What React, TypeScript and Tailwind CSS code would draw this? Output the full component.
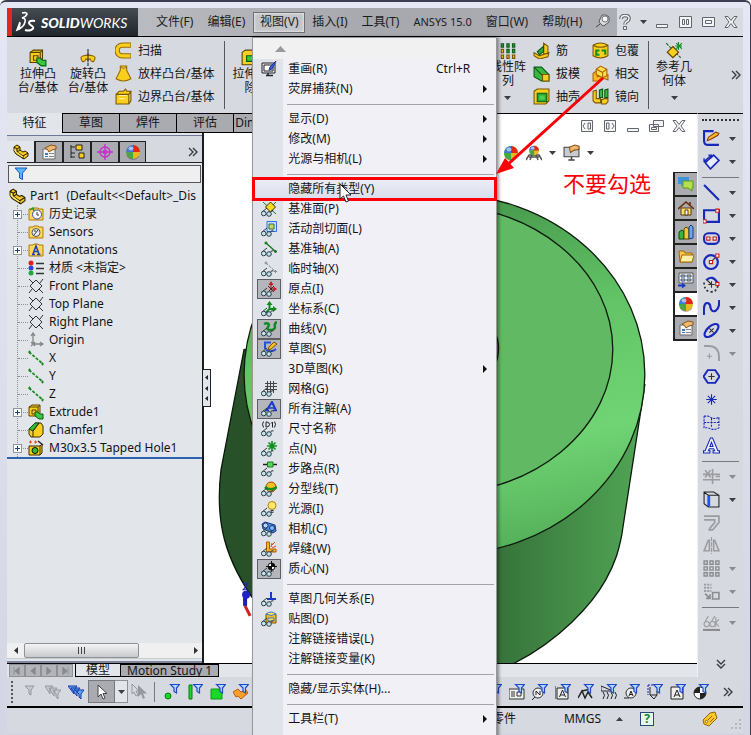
import { ReactNode } from "react";

interface SvgProps {
  children: ReactNode;
  size?: number;
}

function Svg({ children, size = 16 }: SvgProps) {
  return (
    <svg
      viewBox="0 0 16 16"
      width={size}
      height={size}
      fill="none"
      className="shrink-0"
      aria-hidden="true"
    >
      {children}
    </svg>
  );
}

function Caret({ gray = false }: { gray?: boolean }) {
  return (
    <svg viewBox="0 0 7 4" width="7" height="4" className="shrink-0" aria-hidden="true">
      <path d="M0 0h7L3.5 4z" fill={gray ? "#8a8c90" : "#3c3e42"} />
    </svg>
  );
}

function DoubleChevron({ down = false }: { down?: boolean }) {
  return (
    <svg
      viewBox="0 0 10 10"
      width="10"
      height="10"
      fill="none"
      stroke="#3b3d42"
      strokeWidth="1.4"
      className={down ? "rotate-90" : ""}
      aria-hidden="true"
    >
      <path d="M1 1l4 4-4 4M5 1l4 4-4 4" />
    </svg>
  );
}

const funnel = (
  <path d="M6.500 .5h9l-3 3.500v5l-2.500-1.500V4z" fill="#b9d8ff" stroke="#1d49c8" strokeWidth="1.200" />
);

const colorBall = (
  <>
    <circle cx="8" cy="8" r="7" fill="#e8b820" />
    <path d="M8 8V1a7 7 0 0 1 7 7z" fill="#e02818" />
    <path d="M8 8V1a7 7 0 0 0-7 7z" fill="#3f78d8" />
    <path d="M8 8H1a7 7 0 0 0 7 7z" fill="#48a840" />
    <ellipse cx="6" cy="4.500" rx="2.500" ry="2" fill="#fff" opacity=".55" />
    <path d="M2 12a7 7 0 0 0 12 0" stroke="#333" opacity=".4" />
  </>
);

const partIcon = (
  <>
    <path
      d="M1 3l3-2 3 2v3l3 2 2-1 3 2v3l-4 3-8-5-2-3z"
      fill="#f4c81c"
      stroke="#2a2000"
    />
    <path d="M1 3l3 2v3l6 4v3M4 5l3-2M10 12l5-3M7 6l-3 2" stroke="#2a2000" />
    <path d="M2 5v2l8 6" stroke="#fff08a" />
  </>
);

const extrudeIcon = (
  <>
    <path d="M1 3l3-2h8v8l-2 3H1z" fill="#f8cf1e" stroke="#5a4300" />
    <path d="M1 3h9v9M10 3l2-2M4 6h4v4H4z" stroke="#5a4300" />
    <path d="M7 8h3l2 2h3v5h-4l-4-3z" fill="#3cc83c" stroke="#0a5a12" />
  </>
);

const propertyIcon = (
  <>
    <path d="M2 5h12v10H2z" fill="#f4f4f4" stroke="#6c6c6c" />
    <path d="M4 9h3v2H4zM4 12h3v1H4z" fill="#3f7ad0" />
    <path d="M8 9.500h5M8 12.500h5" stroke="#888" />
    <path d="M4 4l6-3 5 1v3l-4 1-3 2-1-2z" fill="#eeb870" stroke="#8a5518" />
  </>
);

const folder = <path d="M1 3h4l1-1h4l1 1h4v11H1z" fill="#fbd75a" stroke="#b47b08" />;

const planeIcon = (
  <path d="M8 2l6 6-6 6-6-6zM1 1l4 4M11 11l4 4M12 5l3-4M1 15l3-4" stroke="#333" />
);

const axisIcon = (
  <>
    <path d="M1 2l14 12" stroke="#188a20" strokeWidth="1.800" strokeDasharray="3 1.500" />
    <path d="M0 2h3M1.500 .5v3M13 14h3M14.500 12.500v3" stroke="#188a20" />
  </>
);

interface TreeNode {
  label: string;
  icon: ReactNode;
  expandable?: boolean;
}

const TREE: TreeNode[] = [
  {
    label: "历史记录",
    expandable: true,
    icon: (
      <>
        {folder}
        <circle cx="9" cy="8.500" r="4.500" fill="#fff" stroke="#3a48b8" />
        <path d="M9 6v3h2" stroke="#333" />
        <path d="M2 4l3-2 1 3" stroke="#1a9a28" strokeWidth="1.500" />
      </>
    ),
  },
  {
    label: "Sensors",
    icon: (
      <>
        {folder}
        <circle cx="8" cy="8.500" r="4" fill="#e8eef4" stroke="#555" />
        <path d="M6 11l4-5M6 7h2" stroke="#333" />
      </>
    ),
  },
  {
    label: "Annotations",
    expandable: true,
    icon: (
      <>
        {folder}
        <path d="M4 12.500h3M9 12.500h3.500M5 12L8 4l3 8M6 9.500h4" stroke="#1b3fc8" strokeWidth="1.500" />
      </>
    ),
  },
  {
    label: "材质 <未指定>",
    icon: (
      <>
        <circle cx="3" cy="3" r="2.500" fill="#d82020" />
        <circle cx="3" cy="8" r="2.500" fill="#2848d0" />
        <circle cx="3" cy="13" r="2.500" fill="#20a838" />
        <path d="M8 3.500h8M8 8.500h8M8 13.500h8" stroke="#333" strokeWidth="1.500" />
      </>
    ),
  },
  { label: "Front Plane", icon: planeIcon },
  { label: "Top Plane", icon: planeIcon },
  { label: "Right Plane", icon: planeIcon },
  {
    label: "Origin",
    icon: (
      <path d="M5 12V2M3 4l2-3 2 3M5 12h9M12 10l3 2-3 2M3 10l4 4M7 10l-4 4" stroke="#858585" strokeWidth="1.300" />
    ),
  },
  { label: "X", icon: axisIcon },
  { label: "Y", icon: axisIcon },
  { label: "Z", icon: axisIcon },
  { label: "Extrude1", expandable: true, icon: extrudeIcon },
  {
    label: "Chamfer1",
    icon: (
      <>
        <path d="M1 7l6-6h6l2 3v8l-3 3H3l-2-3z" fill="#f8cf1e" stroke="#3a2c00" />
        <path d="M1 7l6-6h4L5 9z" fill="#38b838" stroke="#0a4a12" />
        <path d="M5 9v6M5 9l6-8" stroke="#3a2c00" />
      </>
    ),
  },
  {
    label: "M30x3.5 Tapped Hole1",
    expandable: true,
    icon: (
      <>
        <path d="M1 6h11v9H1zM12 6l2-2v9l-2 2" fill="#f8cf1e" stroke="#3a2c00" />
        <circle cx="7" cy="10.500" r="3" fill="#38b838" stroke="#111" />
        <path d="M1 2h3M6 2h3M2.500 .5v3M7.500 .5v3" stroke="#e04818" />
        <path d="M10 1l5 4" stroke="#222" strokeWidth="1.500" />
      </>
    ),
  },
];

interface MenuEntry {
  label?: string;
  icon?: ReactNode;
  checked?: boolean;
  shortcut?: string;
  submenu?: boolean;
  highlight?: boolean;
  glasses?: boolean;
}

const SEPARATOR: MenuEntry = {};

const pencil = <path d="M8 6l5-5 3 2-6 5-3 1z" fill="#f8c028" stroke="#7a4a10" />;

const VIEW_MENU: MenuEntry[] = [
  {
    label: "重画(R)",
    shortcut: "Ctrl+R",
    icon: (
      <>
        <path d="M1 2h13v10H1z" fill="#e8e8e8" stroke="#222" />
        <path d="M3 4h9v6H3z" fill="#fff" stroke="#222" />
        <path d="M5 14.500h7M7 12v2" stroke="#222" strokeWidth="1.500" />
        <path d="M15 0l-6 6-1 3 3-1z" fill="#3060e8" stroke="#1838a0" />
      </>
    ),
  },
  { label: "荧屏捕获(N)", submenu: true },
  SEPARATOR,
  { label: "显示(D)", submenu: true },
  { label: "修改(M)", submenu: true },
  { label: "光源与相机(L)", submenu: true },
  SEPARATOR,
  { label: "隐藏所有类型(Y)", highlight: true },
  {
    label: "基准面(P)",
    glasses: true,
    icon: (
      <>
        <path d="M2 1l13 12M15 1l-4 4" stroke="#187a20" />
        <path d="M9.500 1l5 5-5 5-5-5z" fill="#f8d820" stroke="#3a3000" />
      </>
    ),
  },
  {
    label: "活动剖切面(L)",
    glasses: true,
    icon: (
      <>
        <path d="M6 .5h9.500v10H6z" fill="#c8dcff" stroke="#3070e0" />
        <path d="M8 3h5v5H8z" fill="#d8d058" stroke="#287838" />
      </>
    ),
  },
  {
    label: "基准轴(A)",
    glasses: true,
    icon: (
      <path d="M5 2l10 9M3.500 2h3M5 .5v3M13 10.500h3M14.500 9v3" stroke="#187a20" strokeWidth="1.400" />
    ),
  },
  {
    label: "临时轴(X)",
    glasses: true,
    icon: <path d="M5 2l10 9M3.500 2h3M5 .5v3M13 10.500h3M14.500 9v3" stroke="#888" strokeDasharray="3 1" />,
  },
  {
    label: "原点(I)",
    checked: true,
    glasses: true,
    icon: (
      <>
        <path d="M10 8V3M10 8h4M7 5l6 6M13 5l-5 5" stroke="#7a1010" />
        <path d="M7.500 4L10 0l2.500 4zM12.500 5.500L16 8l-3.500 2.500z" fill="#c81818" />
      </>
    ),
  },
  {
    label: "坐标系(C)",
    glasses: true,
    icon: (
      <>
        <path d="M8.500 8V3M8 8h5M8.500 8l-4 4" stroke="#108a20" strokeWidth="2" />
        <path d="M5.500 4l3-4 3 4zM12 5l4 3-4 3z" fill="#108a20" />
      </>
    ),
  },
  {
    label: "曲线(V)",
    checked: true,
    glasses: true,
    icon: <path d="M3 3c4-2 6 0 4 3s3 4 6 2-2-5 3-7" stroke="#108a20" strokeWidth="2.500" />,
  },
  {
    label: "草图(S)",
    checked: true,
    glasses: true,
    icon: (
      <>
        <path d="M10 1.500H4V8M5 9c4 2 8 1 10-1" stroke="#2850e0" strokeWidth="2" />
        {pencil}
      </>
    ),
  },
  { label: "3D草图(K)", submenu: true },
  {
    label: "网格(G)",
    glasses: true,
    icon: <path d="M6.500 0v12M9.500 0v12M12.500 0v12M4 2.500h12M4 5.500h12M4 8.500h12" stroke="#444" />,
  },
  {
    label: "所有注解(A)",
    checked: true,
    glasses: true,
    icon: (
      <>
        <path d="M5.500 9.500L11 1l4 8.500" stroke="#1838c8" strokeWidth="2" />
        <path d="M8 7h6M4 9.500h4M12 9.500h4" stroke="#1838c8" strokeWidth="1.500" />
      </>
    ),
  },
  {
    label: "尺寸名称",
    glasses: true,
    icon: (
      <path
        d="M2.500 .5Q.5 3 2.500 6.500M13.500 .5q2 2.500 0 6M5 1v5h1Q8.500 5.500 8.500 3.500T6 1zM10 2.500l1.500-1.500V6.500"
        stroke="#222"
      />
    ),
  },
  {
    label: "点(N)",
    glasses: true,
    icon: <path d="M11 0v10M6 5h10M7.500 1.500l7 7M14.500 1.500l-7 7" stroke="#109020" strokeWidth="1.700" />,
  },
  {
    label: "步路点(R)",
    glasses: true,
    icon: (
      <>
        <path d="M2 3.500h14" stroke="#222" strokeWidth="1.500" />
        <path d="M6.500 1h5.500v5H6.500z" fill="#58d858" stroke="#187a20" />
      </>
    ),
  },
  {
    label: "分型线(T)",
    glasses: true,
    icon: (
      <>
        <circle cx="10" cy="6" r="5" fill="#f0c020" stroke="#a04808" />
        <path d="M4 6c3 3 8 3 12 0" stroke="#109020" strokeWidth="2.500" />
      </>
    ),
  },
  {
    label: "光源(I)",
    glasses: true,
    icon: (
      <>
        <circle cx="11" cy="4.500" r="4" fill="#ffe868" stroke="#b08010" />
        <path d="M9.500 9.500h3M9.500 11.500h3" stroke="#555" />
      </>
    ),
  },
  {
    label: "相机(C)",
    glasses: true,
    icon: (
      <>
        <path d="M1 3l3-2 10 3 1 6-3 2-10-4z" fill="#4888e0" stroke="#183878" />
        <circle cx="4.500" cy="4.500" r="2.500" fill="#b8d8ff" stroke="#183878" />
        <circle cx="11" cy="7" r="2.500" fill="#88b8f8" stroke="#183878" />
      </>
    ),
  },
  {
    label: "焊缝(W)",
    glasses: true,
    icon: (
      <>
        <path d="M5.500 1h3v7H15v3H5.500z" fill="#f8b818" stroke="#b05808" />
        <path d="M10 6l1-4M11 7l4-2M11 4l3-3" stroke="#d84818" />
      </>
    ),
  },
  {
    label: "质心(N)",
    checked: true,
    glasses: true,
    icon: (
      <>
        <circle cx="10.500" cy="5.500" r="3.500" fill="#fff" stroke="#111" />
        <path d="M10.500 2v3.500H14A3.500 3.500 0 0 0 10.500 2zM10.500 9V5.500H7A3.500 3.500 0 0 0 10.500 9z" fill="#111" />
        <path d="M10.500 0v11M5 5.500h11" stroke="#111" />
      </>
    ),
  },
  SEPARATOR,
  {
    label: "草图几何关系(E)",
    glasses: true,
    icon: <path d="M10 1v7M6 8h9" stroke="#1838c8" strokeWidth="2" />,
  },
  {
    label: "贴图(D)",
    glasses: true,
    icon: (
      <>
        <path d="M5 3h10v9H5z" fill="#f0c020" stroke="#805008" />
        <path d="M5 3q5-4 10 0-5 3-10 0zM7 7h6v3H7z" fill="#f8e068" stroke="#3878c8" />
      </>
    ),
  },
  { label: "注解链接错误(L)" },
  { label: "注解链接变量(K)" },
  SEPARATOR,
  { label: "隐藏/显示实体(H)..." },
  SEPARATOR,
  { label: "工具栏(T)", submenu: true },
];

function Glasses() {
  return (
    <>
      <path d="M1 11l5-4M9.500 11.500q1-3 3-1.500" stroke="#2c3c44" />
      <circle cx="2.700" cy="12.500" r="2.300" fill="#c4e4f0" stroke="#2c3c44" />
      <circle cx="8" cy="13" r="2.300" fill="#c4e4f0" stroke="#2c3c44" />
    </>
  );
}

function MenuRow({ entry }: { entry: MenuEntry }) {
  if (!entry.label) {
    return (
      <div className="flex h-[10px] items-center pr-[2px] pl-[34px]">
        <hr className="w-full border-0 border-t border-[#a3a3a8]" />
      </div>
    );
  }
  return (
    <button
      type="button"
      role="menuitem"
      className={`relative flex h-5 w-full items-center text-left ${
        entry.highlight ? "bg-linear-to-b from-[#eceef6] to-[#d9dceb]" : ""
      }`}
    >
      <span
        className={`ml-1 flex h-5 w-6 shrink-0 items-center justify-center ${
          entry.checked ? "border border-[#5c5e63] bg-[#b4b6bc]" : ""
        }`}
      >
        {entry.icon && (
          <Svg>
            {entry.icon}
            {entry.glasses && <Glasses />}
          </Svg>
        )}
      </span>
      <span className="ml-[7px]">{entry.label}</span>
      {entry.shortcut && <span className="mr-[26px] ml-auto">{entry.shortcut}</span>}
      {entry.submenu && (
        <svg viewBox="0 0 4 8" width="4" height="8" className="mr-[9px] ml-auto" aria-hidden="true">
          <path d="M0 0l4 4-4 4z" fill="#111" />
        </svg>
      )}
      {entry.highlight && (
        <>
          <span className="absolute -inset-x-px -inset-y-[2px] border-3 border-[#fb0007]" />
          <svg viewBox="0 0 13 20" width="13" height="20" className="absolute top-1 left-[86px]" aria-hidden="true">
            <path d="M1 1v15l3.500-3 2.500 6 2.500-1-2.500-6H12z" fill="#fff" stroke="#222" />
          </svg>
        </>
      )}
    </button>
  );
}

function ViewMenu() {
  return (
    <div
      role="menu"
      className="absolute top-full -left-px z-20 mt-px w-[245px] border border-[#97979c] bg-linear-to-r from-[#e1e3ea] from-[30px] to-[#f1f0f7] to-[30px] pb-4 text-xs whitespace-nowrap text-[#141416] shadow-[2px_0_3px_#0006]"
    >
      <div className="flex h-[21px] items-center bg-[#f1f1f1] pl-[22px]">
        <svg viewBox="0 0 11 6" width="11" height="6" aria-hidden="true">
          <path d="M0 6h11L5.500 0z" fill="#97999c" />
        </svg>
      </div>
      {VIEW_MENU.map((entry, i) => (
        <MenuRow key={i} entry={entry} />
      ))}
    </div>
  );
}

function MenuBarItem({ label }: { label: string }) {
  return (
    <button type="button" className="px-[7px]">
      {label}
    </button>
  );
}

function WindowGlyph({ kind }: { kind: "min" | "split" | "max" | "close" | "left" | "right" | "restore" }) {
  return (
    <svg viewBox="0 0 16 14" width="16" height="14" fill="#f4f5f7" stroke="#63666c" strokeWidth="1" aria-hidden="true">
      {kind === "min" && <path d="M2.500 9.500h11v3h-11z" />}
      {kind === "split" && <path d="M2.500 1.500h12v11h-12zM5.500 4.500h2v5h-2zM9.500 4.500h2v5h-2z" />}
      {kind === "max" && <path d="M2.500 2.500h12v9h-12zM5.500 5.500h6v3h-6z" />}
      {kind === "close" && <path d="M2 1.500h3l3 4 3-4h3L10 7l4 5.500h-3l-3-4-3 4H2L6 7z" />}
      {kind === "left" && <path d="M2.500 1.500h11v11h-11zM9 4h2.500v6H9zM6 4L4 7l2 3" />}
      {kind === "right" && <path d="M2.500 1.500h11v11h-11zM4.500 4H7v6H4.500zM10 4l2 3-2 3" />}
      {kind === "restore" && <path d="M5.500 1.500h10v6h-10zM1.500 5.500h9v7h-9zM3.500 8.500h5v2h-5z" />}
    </svg>
  );
}

function TitleBar() {
  return (
    <header className="flex h-[29px] shrink-0 border-b border-black bg-[#d8dbe1]">
      <div className="flex w-[131px] shrink-0 items-center border-l-[5px] border-[#dd2a1c] bg-linear-to-b from-[#454c52] to-[#20262c] pl-[3px] text-white">
        <svg viewBox="0 0 22 22" width="22" height="22" fill="none" stroke="#fff" strokeWidth="1.600" aria-hidden="true">
          <path d="M7 2q5-1 5 1-1 3-5 4 4 0 3 4-1 5-8 8l3-8M5 12l-1 7" />
          <path d="M20 10q-6-1-6 2 0 1 3 3t-1 4q-3 1-6 0" strokeWidth="2" />
        </svg>
        <span className="ml-[4px] pt-[2px] font-['Lato',sans-serif] text-sm leading-4 italic">
          <b className="font-black">SOLID</b>WORKS
        </span>
      </div>
      <nav className="flex shrink-0 items-stretch bg-linear-to-r from-[#b9bbc0] via-[#a6a8ad] to-[#acaeb3] pl-[11px] text-xs whitespace-nowrap text-[#1c1c1e]">
        <MenuBarItem label="文件(F)" />
        <MenuBarItem label="编辑(E)" />
        <div className="relative ml-px flex items-center">
          <button
            type="button"
            aria-expanded="true"
            className="h-[21px] w-[52px] border border-[#6e7074] bg-[#c4c5c9] shadow-[inset_0_0_3px_#fff]"
          >
            视图(V)
          </button>
          <ViewMenu />
        </div>
        <MenuBarItem label="插入(I)" />
        <MenuBarItem label="工具(T)" />
        <button type="button" className="px-[7px] text-[11px]">
          ANSYS 15.0
        </button>
        <MenuBarItem label="窗口(W)" />
        <MenuBarItem label="帮助(H)" />
        <button type="button" aria-label="固定" className="px-[6px]">
          <Svg>
            <path d="M1 13l4-3" stroke="#444" />
            <path d="M4 8l4 4 2-1 4-3V3l-3-2H7L5 5z" fill="#d8dade" stroke="#55585e" />
            <circle cx="10" cy="5" r="3" fill="#f8f8f8" stroke="#777" />
          </Svg>
        </button>
      </nav>
      <div className="ml-auto flex items-center">
        <button type="button" aria-label="帮助">
          <Svg>
            <path d="M4 5q0-3.500 4-3.500t4 3q0 2-2.500 3.200Q8 8.500 8 10.500" stroke="#5f6268" strokeWidth="3.500" />
            <path d="M4 5q0-3.500 4-3.500t4 3q0 2-2.500 3.200Q8 8.500 8 10.500" stroke="#f2f3f5" strokeWidth="1.500" />
            <path d="M6.500 12.500h3v3h-3z" fill="#f2f3f5" stroke="#5f6268" />
          </Svg>
        </button>
        <span className="mx-[7px]">
          <Caret />
        </span>
        <div className="flex gap-[7px] pr-1">
          <button type="button" aria-label="最小化"><WindowGlyph kind="min" /></button>
          <button type="button" aria-label="平铺"><WindowGlyph kind="split" /></button>
          <button type="button" aria-label="最大化"><WindowGlyph kind="max" /></button>
          <button type="button" aria-label="关闭"><WindowGlyph kind="close" /></button>
        </div>
      </div>
    </header>
  );
}

interface BigButtonProps {
  lines: [string, string];
  icon: ReactNode;
  caret?: boolean;
}

function BigButton({ lines, icon, caret }: BigButtonProps) {
  return (
    <button
      type="button"
      className={`flex w-[50px] shrink-0 flex-col items-center ${caret ? "pt-[5px]" : "pt-[12px]"}`}
    >
      <Svg size={18}>{icon}</Svg>
      <span className="text-xs leading-[14px] whitespace-nowrap">{lines[0]}</span>
      <span className="text-xs leading-[14px] whitespace-nowrap">{lines[1]}</span>
      {caret && (
        <span className="mt-[8px] flex">
          <Caret />
        </span>
      )}
    </button>
  );
}

function SmallButton({ label, icon }: { label: string; icon: ReactNode }) {
  return (
    <button type="button" className="flex h-[23px] items-center gap-[6px] text-xs whitespace-nowrap">
      <Svg size={17}>{icon}</Svg>
      {label}
    </button>
  );
}

function Ribbon() {
  return (
    <div className="flex h-[76px] shrink-0 overflow-hidden bg-[#d6d9df] pl-[6px]">
      <BigButton lines={["拉伸凸", "台/基体"]} icon={extrudeIcon} />
      <BigButton
        lines={["旋转凸", "台/基体"]}
        icon={
          <>
            <path d="M8 0v16" stroke="#333" strokeDasharray="3 1" />
            <path d="M3 11q-3-4 1-5 4-1 8 0 4 1 1 5-2 1-3-2H6q-1 3-3 2z" fill="#f8cf1e" stroke="#8a6000" />
            <path d="M8 3v8" stroke="#333" />
          </>
        }
      />
      <div className="ml-[2px] pt-[2px]">
        <SmallButton
          label="扫描"
          icon={
            <>
              <path d="M15 3H7a5 5 0 0 0 0 10h8" stroke="#9a6c00" strokeWidth="5" />
              <path d="M14.500 3H7a5 5 0 0 0 0 10h7.500" stroke="#f8cf1e" strokeWidth="3" />
            </>
          }
        />
        <SmallButton
          label="放样凸台/基体"
          icon={<path d="M5 1h6v4l4 8q-7 4-14 0l4-8zM5 2q3 2 6 0" fill="#f8cf1e" stroke="#9a6c00" />}
        />
        <SmallButton
          label="边界凸台/基体"
          icon={
            <>
              <path d="M1 6h12v9H1zM1 6l3-3h4l2-2 1 2h4l-2 3M13 15l2-3V3" fill="#f8cf1e" stroke="#7a5400" />
              <path d="M4 7h7M4 10h5" stroke="#fff3a0" />
            </>
          }
        />
      </div>
      <div className="my-1 ml-[10px] w-px shrink-0 bg-[#55585e]" />
      <BigButton
        lines={["拉伸切", "除"]}
        icon={
          <>
            <path d="M1 3l3-2h10v10l-2 3H1z" fill="#f8cf1e" stroke="#5a4300" />
            <path d="M5 6h6v5H5z" fill="#3cc83c" stroke="#0a5a12" />
          </>
        }
      />
      <div className="ml-auto flex">
        <BigButton
          caret
          lines={["线性阵", "列"]}
          icon={
            <>
              <path d="M2 1.500h2v3H2zM7 1.500h2v3H7zM12 1.500h2v3h-2zM7 6.500h2v3H7zM12 6.500h2v3h-2z" fill="#28a838" stroke="#125a1a" />
              <path d="M2 6.500h2v3H2zM2 11.500h2v3H2zM7 11.500h2v3H7zM12 11.500h2v3h-2z" fill="#f0c020" stroke="#7a5400" />
            </>
          }
        />
        <div className="pt-[2px]">
          <SmallButton
            label="筋"
            icon={
              <>
                <path d="M1 10l5 3 9-3-1 4-8 2-5-3zM10 1l4 3v7h-4z" fill="#f8cf1e" stroke="#7a5400" />
                <path d="M4 9l6-5v5l-4 3z" fill="#30a838" stroke="#0a5a12" />
              </>
            }
          />
          <SmallButton
            label="拔模"
            icon={
              <>
                <path d="M1 2l7 0 7 7v6H8L1 11z" fill="#38b840" stroke="#0a5a12" />
                <path d="M1 2l8 8v5" stroke="#0a5a12" />
                <path d="M9 9h6v6H9z" fill="#f8cf1e" stroke="#7a5400" />
              </>
            }
          />
          <SmallButton
            label="抽壳"
            icon={
              <>
                <path d="M1 3l3-2h11v11l-3 3H1z" fill="#f8cf1e" stroke="#7a5400" />
                <path d="M4 5h9v8H4z" fill="#28a838" stroke="#0a5a12" />
                <path d="M6 7h5v4H6z" fill="#4ad052" />
              </>
            }
          />
        </div>
        <div className="ml-3 pt-[2px]">
          <SmallButton
            label="包覆"
            icon={
              <>
                <path d="M1 3q7-4 14 0v10q-7 4-14 0z" fill="#f8cf1e" stroke="#7a5400" />
                <path d="M7 8H4v4h3M9 8h3.500v4" stroke="#109020" strokeWidth="2" />
                <path d="M1 3q7 4 14 0" stroke="#7a5400" />
              </>
            }
          />
          <SmallButton
            label="相交"
            icon={
              <>
                <path d="M1 8l4-3v6l10-2v5l-5-2-4 3H1z" fill="#f8b81e" stroke="#b06008" />
                <path d="M4 4l4-3 6 3v6l-4 2-6-3z" fill="#ffe04a" stroke="#b06008" />
                <path d="M4 4l6 3v5M10 7l4-3" stroke="#b06008" />
              </>
            }
          />
          <SmallButton
            label="镜向"
            icon={
              <>
                <path d="M1 3l3-1v8h4v4H3l-2-2zM12 10h3v3l-2 2H9v-4z" fill="#f8cf1e" stroke="#7a5400" />
                <path d="M7 2l3-1v8H7zM12 2l3-1v8h-3z" fill="#38b840" stroke="#0a5a12" />
              </>
            }
          />
        </div>
        <div className="my-1 ml-[9px] w-px bg-[#55585e]" />
        <BigButton
          caret
          lines={["参考几", "何体"]}
          icon={
            <>
              <path d="M1 1l13 13" stroke="#187a20" strokeDasharray="3 1" />
              <path d="M7 4l5 5-5 5-5-5z" fill="#f8cf1e" stroke="#5a4300" />
              <path d="M12 0v7M9 3.500h6M10 1l5 5M15 1l-5 5" stroke="#109020" />
            </>
          }
        />
        <button type="button" aria-label="更多" className="mr-[2px] ml-8">
          <DoubleChevron />
        </button>
      </div>
    </div>
  );
}

function CommandTabs() {
  return (
    <div className="flex h-5 shrink-0">
      <div role="tablist" className="flex shrink-0 text-xs">
        <button type="button" role="tab" aria-selected="true" className="w-[55px] bg-[#e2e5ea]">
          特征
        </button>
        {["草图", "焊件", "评估", "DimXpert"].map((tab) => (
          <button
            key={tab}
            type="button"
            role="tab"
            className="w-[57px] border border-r-0 border-black bg-[#a9abb0]"
          >
            {tab}
          </button>
        ))}
      </div>
      <div className="flex flex-1 items-end justify-end gap-[7px] border-t border-black bg-white pr-[10px]">
        <button type="button" aria-label="左窗格"><WindowGlyph kind="left" /></button>
        <button type="button" aria-label="右窗格"><WindowGlyph kind="right" /></button>
        <button type="button" aria-label="最小化文档"><WindowGlyph kind="min" /></button>
        <button type="button" aria-label="还原文档"><WindowGlyph kind="restore" /></button>
        <button type="button" aria-label="关闭文档"><WindowGlyph kind="close" /></button>
      </div>
    </div>
  );
}

const PANEL_TABS: ReactNode[] = [
  propertyIcon,
  <>
    <path d="M2 1v13M2 3h4M2 9h4M2 13h4" stroke="#222" />
    <path d="M7 1h6v5H7zM10 9h5v5h-5z" fill="#f8cf1e" stroke="#222" />
  </>,
  <>
    <circle cx="8" cy="8" r="5" stroke="#c030c8" strokeWidth="1.300" />
    <circle cx="8" cy="8" r="2" stroke="#c030c8" />
    <path d="M8 0v16M0 8h16" stroke="#c030c8" strokeWidth="1.300" />
  </>,
  colorBall,
];

function FeaturePanel() {
  return (
    <aside className="flex w-[197px] shrink-0 flex-col border-r-2 border-[#1c1c20] bg-[#e2e6eb]">
      <div className="mt-[2px] h-[6px] shrink-0 border-t border-[#6f7896] bg-[#d6d9df]" />
      <div className="flex h-[22px] shrink-0 items-center border-b border-[#222] bg-[#d6d9df]">
        <button type="button" aria-label="特征树" className="flex h-full w-[27px] items-center justify-center bg-[#e2e6eb]">
          <Svg>{partIcon}</Svg>
        </button>
        {PANEL_TABS.map((icon, i) => (
          <button
            key={i}
            type="button"
            aria-label={`窗格 ${i + 2}`}
            className="flex h-full w-7 items-center justify-center border-t border-l-2 border-[#222] bg-[#a9abb0] last-of-type:border-r"
          >
            <Svg>{icon}</Svg>
          </button>
        ))}
        <span className="mr-1 ml-auto">
          <DoubleChevron />
        </span>
      </div>
      <label className="mx-px mt-[2px] flex h-[18px] shrink-0 items-center border border-[#55555a] bg-[#efeff0] pl-1">
        <Svg>
          <path d="M2 2h12l-4.500 5v6.500L6.500 12V7z" fill="#58b8f8" stroke="#1858c0" />
        </Svg>
        <input type="text" aria-label="过滤器" className="min-w-0 flex-1 bg-transparent text-xs outline-none" />
      </label>
      <div className="mt-[4px] text-xs whitespace-nowrap">
        <div className="flex h-[18px] items-center gap-1 pl-[2px]">
          <Svg size={17}>{partIcon}</Svg>
          <span className="whitespace-pre">{"Part1  (Default<<Default>_Dis"}</span>
        </div>
        <ul className="relative ml-[10px] border-l border-dotted border-[#8e9196]">
          {TREE.map(({ label, icon, expandable }) => (
            <li key={label} className="flex h-[18px] items-center">
              <span className="w-[10px] shrink-0 border-t border-dotted border-[#8e9196]" />
              {expandable && (
                <button
                  type="button"
                  aria-label={`展开 ${label}`}
                  className="absolute -left-[5px] flex size-[9px] items-center justify-center border border-[#8b95a8] bg-white"
                >
                  <svg viewBox="0 0 5 5" width="5" height="5" className="shrink-0" aria-hidden="true">
                    <path d="M2 0h1v2h2v1H3v2H2V3H0V2h2z" fill="#24407c" />
                  </svg>
                </button>
              )}
              <Svg>{icon}</Svg>
              <span className="ml-[5px]">{label}</span>
            </li>
          ))}
        </ul>
        <div className="h-[2px] bg-[#2c62b0]" />
      </div>
      <div className="mt-auto mb-[2px] flex h-4 shrink-0 items-center border-b border-[#c8cace] bg-[#f0f0f0]">
        <button type="button" aria-label="向左" className="flex w-[17px] justify-center">
          <svg viewBox="0 0 4 7" width="4" height="7"><path d="M4 0v7L0 3.500z" fill="#333" /></svg>
        </button>
        <div className="flex h-[15px] w-[115px] items-center justify-center gap-[2px] rounded-xs border border-[#8f9296] bg-linear-to-b from-[#f4f4f4] to-[#c8cacd]">
          <i className="h-[7px] w-px bg-[#444]" />
          <i className="h-[7px] w-px bg-[#444]" />
          <i className="h-[7px] w-px bg-[#444]" />
        </div>
        <button type="button" aria-label="向右" className="ml-auto flex w-3 justify-center">
          <svg viewBox="0 0 4 7" width="4" height="7"><path d="M0 0v7l4-3.500z" fill="#333" /></svg>
        </button>
      </div>
      <div className="h-[2px] shrink-0 bg-[#7e869c]" />
    </aside>
  );
}

const TASK_TABS: ReactNode[] = [
  <>
    <path d="M0 1h11v7H5l-2 3V8H0z" fill="#3f94d8" />
    <path d="M5 5h10v7h-1v3l-4-3H5z" fill="#b4e050" stroke="#5a9a18" />
  </>,
  <>
    <path d="M3 8h10v7H3z" fill="#fbe070" stroke="#5a3a08" />
    <path d="M0 9l8-7 8 7M12 2v3" stroke="#6a2a08" strokeWidth="1.500" />
    <path d="M7 10h3v5H7z" fill="#fff" stroke="#5a3a08" />
  </>,
  <>
    <path d="M1 8l3-2 2 2v7H1z" fill="#30b840" stroke="#0a4a12" />
    <path d="M6 5l2-2 3 2v10H6z" fill="#f0c838" stroke="#5a4300" />
    <path d="M11 3l2-2 2 2v11l-4 1z" fill="#70a8f0" stroke="#183878" />
  </>,
  <>
    <path d="M1 3h5l1 2h7v9H2z" fill="#f8c848" stroke="#a06808" />
    <path d="M4 7h12l-2 7H2z" fill="#fff0a8" stroke="#a06808" />
  </>,
  <>
    <path d="M1 1h14v10H1z" fill="#f4f4f4" stroke="#555" />
    <path d="M3 3h4v2H3zM9 3h4v2H9zM3 7h4v2H3zM9 7h4v2H9z" fill="#e8c838" stroke="#3858a8" />
    <path d="M0 13.500h4" stroke="#1838c8" strokeWidth="2" />
    <path d="M4 10.500l4 3-4 3z" fill="#1838c8" />
  </>,
  colorBall,
  propertyIcon,
];

function Model() {
  return (
    <svg
      viewBox="205 134 492 529"
      preserveAspectRatio="xMinYMin meet"
      className="absolute inset-0 h-full w-full"
      role="img"
      aria-label="Part1"
    >
      <defs>
        <linearGradient id="side" x1="220" x2="645" y1="0" y2="0" gradientUnits="userSpaceOnUse">
          <stop offset="0" stopColor="#28522b" />
          <stop offset=".1" stopColor="#285028" />
          <stop offset=".65" stopColor="#36723a" />
          <stop offset="1" stopColor="#52a656" />
        </linearGradient>
        <linearGradient id="chamfer" x1="496" y1="200" x2="560" y2="540" gradientUnits="userSpaceOnUse">
          <stop offset="0" stopColor="#489a4d" />
          <stop offset=".35" stopColor="#62c466" />
          <stop offset=".7" stopColor="#70d474" />
          <stop offset="1" stopColor="#55b059" />
        </linearGradient>
      </defs>
      <path
        d="M245 350L222 470C216 520 224 560 262 610C310 670 440 690 515 663C560 640 592 605 606 580C616 562 619 550 622 535L645 385z"
        fill="url(#side)"
        stroke="#0c1a0c"
        strokeWidth="1.300"
      />
      <ellipse cx="445" cy="375" rx="200" ry="180" fill="url(#chamfer)" stroke="#0c1a0c" strokeWidth="1.300" />
      <ellipse cx="435" cy="350" rx="178" ry="145" fill="#61b963" stroke="#0c1a0c" strokeWidth="1.300" />
      <ellipse cx="440" cy="349" rx="59" ry="48" fill="#3d8a42" stroke="#0c1a0c" strokeWidth="1.300" />
      <path d="M246 606l5 10" stroke="#d02020" strokeWidth="3" />
      <path d="M246 606v-8" stroke="#1c20a8" strokeWidth="4" />
      <circle cx="247" cy="595" r="4" fill="#2020c8" />
      <path d="M244 584h5l-5 6h5" stroke="#2020d8" fill="none" />
    </svg>
  );
}

function Viewport() {
  return (
    <main className="relative flex min-w-0 flex-1 items-start bg-white">
      <Model />
      <button
        type="button"
        aria-label="折叠窗格"
        className="relative mt-[236px] -ml-px flex h-[38px] w-2 flex-col items-center justify-evenly border border-l-0 border-[#222] bg-[#e2e6eb]"
      >
        {[0, 1, 2].map((n) => (
          <svg key={n} viewBox="0 0 3 5" width="3" height="5"><path d="M3 0v5L0 2.500z" fill="#222" /></svg>
        ))}
      </button>
      <div className="relative mt-[11px] ml-auto flex items-center gap-[7px] pr-[79px]">
        <Svg>{colorBall}</Svg>
        <Svg>
          <path d="M0 15l3-5h10l3 5M3 12h10M6 10l-2 5M10 10l2 5" stroke="#555" strokeWidth="1.500" />
          <g transform="translate(2.500 0) scale(.7)">{colorBall}</g>
        </Svg>
        <Caret />
        <Svg size={17}>
          <path d="M1 3h14v9H1z" fill="#c8ccd0" stroke="#444" />
          <path d="M5 15h6M8 12v3" stroke="#444" strokeWidth="1.500" />
          <path d="M6 3l5-2 4 1v3l-5 1-3 2z" fill="#eeb870" stroke="#8a5518" />
        </Svg>
        <Caret />
      </div>
      <div className="relative mt-[39px] flex w-6 flex-col border-t border-l-2 border-[#222]">
        {TASK_TABS.map((icon, i) => (
          <button
            key={i}
            type="button"
            aria-label={`任务 ${i + 1}`}
            className={`flex h-6 items-center justify-center border-b-2 border-[#222] ${
              i === 5 ? "bg-white" : "bg-[#a9abb0]"
            }`}
          >
            <Svg>{icon}</Svg>
          </button>
        ))}
      </div>
      <p className="absolute top-[35px] right-[46px] text-[22px] leading-[30px] text-[#fb0007]">不要勾选</p>
    </main>
  );
}

function DocumentTabs() {
  return (
    <div className="flex h-[14px] shrink-0 border-t border-black bg-[#e2e6eb] pl-[2px]">
      {["M11 3v10l-6-5zM4 3v10", "M11 3v10l-6-5z", "M5 3v10l6-5z", "M5 3v10l6-5zM12 3v10"].map((d) => (
        <button
          key={d}
          type="button"
          aria-label="滚动标签"
          className="flex w-4 items-center justify-center border border-[#8e9094] bg-[#b2b4b9]"
        >
          <Svg size={12}>
            <path d={d} fill="#888a8f" stroke="#888a8f" />
          </Svg>
        </button>
      ))}
      <button type="button" className="ml-[2px] flex w-[46px] items-center justify-center border border-t-0 border-black text-xs leading-3">
        模型
      </button>
      <button type="button" className="flex items-center border border-l-0 border-black bg-[#a9abb0] px-[6px] text-xs leading-3">
        Motion Study 1
      </button>
    </div>
  );
}

interface SketchTool {
  icon?: ReactNode;
  caret?: boolean;
  gray?: boolean;
}

const redDot = (x: number, y: number) => (
  <path d={`M${x} ${y}h3v3h-3z`} fill="#fff" stroke="#c81818" />
);

const SKETCH_TOOLS: SketchTool[] = [
  {
    caret: true,
    icon: (
      <>
        <path d="M10 1H1v9q0 4 4 4h10" stroke="#1828b8" strokeWidth="2" />
        <path d="M5 7l7-5 3 1-1 2-7 4-3 1z" fill="#f8b828" stroke="#8a3a10" />
      </>
    ),
  },
  {
    caret: true,
    icon: (
      <>
        <path d="M2 9l8-7 5 5-8 8z" fill="#e8ecff" stroke="#1828b8" strokeWidth="1.500" />
        <path d="M1 8l7-6M1 5v3h3M5 2h3v3" stroke="#1828b8" strokeWidth="1.300" />
      </>
    ),
  },
  {},
  { caret: true, icon: <path d="M1 1l14 14" stroke="#1828b8" strokeWidth="2" /> },
  { caret: true, icon: <><path d="M1 3h14v11H1z" stroke="#1828b8" strokeWidth="2" />{redDot(12, 2)}{redDot(0, 12)}</> },
  {
    caret: true,
    icon: (
      <>
        <rect x="1" y="3" width="14" height="10" rx="4" stroke="#1828b8" strokeWidth="2" />
        {redDot(3.500, 6.500)}
        {redDot(9.500, 6.500)}
      </>
    ),
  },
  {
    caret: true,
    icon: (
      <>
        <circle cx="7.500" cy="8.500" r="6.500" stroke="#1828b8" strokeWidth="2" />
        <path d="M8 8l5-5" stroke="#333" />
        {redDot(6, 7)}
        {redDot(12, 1)}
      </>
    ),
  },
  {
    caret: true,
    icon: (
      <>
        <path d="M3 4q6-6 11 3" stroke="#1828b8" strokeWidth="2" />
        <path d="M14 9q-1 6-7 6-6-1-6-9" stroke="#333" strokeWidth="1.600" strokeDasharray="2 2" />
        <path d="M4 4l4 4M5 8h6M8 5v6" stroke="#333" />
        {redDot(12, 6)}
      </>
    ),
  },
  { caret: true, icon: <path d="M1 15q-1-13 4-11 2 1 2 4 1 5 5 3 4-3 3-10" stroke="#1828b8" strokeWidth="2" /> },
  {
    caret: true,
    icon: (
      <>
        <ellipse cx="8" cy="8" rx="8" ry="4" transform="rotate(-42 8 8)" stroke="#1828b8" strokeWidth="2" />
        <path d="M6 6l4 4M10 6l-4 4" stroke="#333" />
      </>
    ),
  },
  {
    caret: true,
    gray: true,
    icon: (
      <>
        <path d="M1 1h4q10 0 10 10v4" stroke="#9a9ca0" strokeWidth="1.800" />
        <path d="M6 8v5M3.500 10.500h5" stroke="#9a9ca0" />
      </>
    ),
  },
  {
    icon: (
      <>
        <path d="M4.500 2h7l4 6-4 6h-7l-4-6z" stroke="#1828b8" strokeWidth="1.800" />
        <path d="M8 5v6M5 8h6" stroke="#333" />
      </>
    ),
  },
  { icon: <path d="M8 3v10M3 8h10M4.500 4.500l7 7M11.500 4.500l-7 7" stroke="#1828b8" /> },
  { icon: <path d="M1 2h4q6 4 10 1v10q-5 3-10 0H1zM1 8h14M8 4v9" stroke="#1828b8" strokeDasharray="2 1" /> },
  {
    icon: (
      <>
        <path
          d="M7 1h2l5 12h1.500v2H9.500v-2h1.500l-1-2H6l-1 2h1.500v2H.5v-2H2z"
          fill="#f2f4ff"
          stroke="#1828b8"
        />
        <path d="M6.500 9h3L8 5z" fill="#d6d9df" stroke="#1828b8" />
      </>
    ),
  },
  {},
  {
    caret: true,
    gray: true,
    icon: <path d="M0 6h16M0 11h16M9 1v14M2 2l5 7M2 9l5-7M12 8h4" stroke="#9a9ca0" strokeWidth="1.500" />,
  },
  {
    caret: true,
    icon: (
      <>
        <path d="M1 1h9l5 3v11H5l-4-3zM5 4h10M1 1l4 3v11" stroke="#222" />
        <path d="M5.500 4.500v10" stroke="#2050ff" strokeWidth="2.500" />
      </>
    ),
  },
  {
    icon: (
      <path d="M1 2h14v6l-6 7H5M1 5.500h10v2.500l-5 6" stroke="#9a9ca0" strokeWidth="1.600" />
    ),
  },
  {
    icon: (
      <>
        <path d="M8 0v16" stroke="#9a9ca0" strokeDasharray="4 1" />
        <path d="M6 13H1l4-10h1zM10 13h5L11 3h-1z" stroke="#9a9ca0" strokeWidth="1.500" />
      </>
    ),
  },
  {
    caret: true,
    gray: true,
    icon: (
      <path
        d="M1 1h3v3H1zM6.500 1h3v3h-3zM12 1h3v3h-3zM1 6.500h3v3H1zM6.500 6.500h3v3h-3zM12 6.500h3v3h-3zM1 12h3v3H1zM6.500 12h3v3h-3zM12 12h3v3h-3z"
        stroke="#8a8c90"
        strokeWidth="1.300"
      />
    ),
  },
  {
    caret: true,
    gray: true,
    icon: (
      <>
        <path d="M1 1.500h7M1 4.500h7M1 7.500h7" stroke="#9a9ca0" strokeWidth="1.800" strokeDasharray="2 1" />
        <path d="M9 9h6v6H9z" stroke="#8a8c90" strokeWidth="1.500" />
        <path d="M2 10l4 4M6.500 10.500v4H3" stroke="#8a8c90" strokeWidth="1.500" />
      </>
    ),
  },
  {},
  {
    caret: true,
    gray: true,
    icon: (
      <>
        <path d="M0 15h16" stroke="#8a8c90" strokeWidth="2" />
        <circle cx="3.500" cy="9.500" r="2.500" stroke="#9a9ca0" />
        <circle cx="9" cy="9.500" r="2.500" stroke="#9a9ca0" />
        <path d="M2 7l3-5M8 7l3-5M12 3v9M12 8l3-3M12 8l3 4" stroke="#9a9ca0" />
      </>
    ),
  },
];

function SketchToolbar() {
  return (
    <div className="flex w-[46px] shrink-0 flex-col border-t border-l border-t-black border-l-[#eef0f3] bg-[#d6d9df]">
      <div className="mx-1 mt-[5px] mb-[6px] h-[2px] shrink-0 border-t-2 border-dotted border-[#333]" />
      {SKETCH_TOOLS.map(({ icon, caret, gray }, i) =>
        icon ? (
          <button
            key={i}
            type="button"
            aria-label={`草图工具 ${i}`}
            className="flex h-[23px] shrink-0 items-center gap-[9px] pl-[5px]"
          >
            <Svg size={17}>{icon}</Svg>
            {caret && <Caret gray={gray} />}
          </button>
        ) : (
          <div key={i} className="flex h-2 shrink-0 items-center px-1">
            <hr className="w-full border-0 border-t border-[#77797e]" />
          </div>
        )
      )}
      <button type="button" aria-label="更多工具" className="mt-auto mb-2 flex justify-center">
        <DoubleChevron down />
      </button>
    </div>
  );
}

const FILTERS: ReactNode[] = [
  <circle cx="4" cy="12" r="3" fill="#18d828" stroke="#0a7a14" />,
  <path d="M2 1h3v14H2z" fill="#18d828" stroke="#0a7a14" />,
  <path d="M1 5h11v10H1z" fill="#18d828" stroke="#0a9a14" />,
  <path d="M0 8l5-3 3 3 5-2 2 3-7 6-3-3-2 1z" fill="#f8a028" stroke="#c05808" />,
  ...Array.from({ length: 11 }, () => <path d="M1 7h7v8H1z" stroke="#333" />),
  <path d="M0 5h15v10H0zM2 8h4M2 10h4M2 12h4M8 8h4v4H8z" fill="#f0f0f0" stroke="#333" />,
  <><circle cx="6" cy="9" r="5" fill="#eee" stroke="#333" /><path d="M4 11V7l4 4V7M3 13l-3 3" stroke="#222" /></>,
  <path d="M0 2v13M2 4h11v11H2zM4.500 13L7.500 6l3 7M5.500 11h4" fill="#eee" stroke="#222" />,
  <path d="M0 14l4-7 3 7 3-6 4 6M4 7l9-2" stroke="#222" strokeWidth="1.500" />,
  <path d="M0 2v5h13M0 2l12 5M2 8q3 3 0 7M6 8q3 3 0 7M10 8q3 3 0 7M14 8q3 3 0 7" stroke="#223" />,
  <><circle cx="7" cy="9" r="5" fill="#eee" stroke="#333" /><path d="M5 12l2-5 2 5M6 10.500h2M0 14h5" stroke="#222" /></>,
  <><path d="M1 1v10M1 1h6" stroke="#1828a8" strokeDasharray="2 1" /><path d="M3 3v8l4 4 3-4V7M3 11h7" stroke="#222" /></>,
  <path d="M1 3h12v12H1zM4 13l3-7 3 7M5 11h4" fill="#f0f0f0" stroke="#222" />,
  <>
    <circle cx="7" cy="9" r="6" fill="#fff" stroke="#222" />
    <path d="M7 9V3a6 6 0 0 0-6 6zM7 9h6a6 6 0 0 1-6 6z" fill="#222" />
  </>,
];

const selectArrow = "M4 1v12l3-3 2 5 2-1-2-4.500h4z";

function FilterToolbar() {
  return (
    <div className="flex h-[31px] shrink-0 items-center overflow-hidden border-b-2 border-black bg-[#d6d9df] pl-1">
      <div className="h-[22px] border-l-2 border-dotted border-[#55575c]" />
      <div className="ml-[9px] flex gap-[7px]">
        <button type="button" aria-label="过滤">
          <Svg><path d="M3 2h9L9 6v5L7 10V6z" fill="#c8cacf" stroke="#96989d" /></Svg>
        </button>
        <button type="button" aria-label="清除过滤">
          <Svg><path d="M0 2h8L5 6v4zM4 4h8L9 8v4zM8 6h8l-3 4v5l-2-2v-3z" fill="#c8cacf" stroke="#96989d" /></Svg>
        </button>
        <button type="button" aria-label="所有过滤">
          <Svg><path d="M0 2h9L6 6v4zM3 4h9L9 8v4zM7 6h9l-3 4v5l-2-2v-3z" fill="#58a8f8" stroke="#1838a8" /></Svg>
        </button>
      </div>
      <button type="button" aria-label="选择" className="ml-1 flex h-[23px] w-[27px] shrink-0 items-center justify-center border border-[#77797e] bg-[#a9abb0]">
        <Svg><path d={selectArrow} fill="#fff" stroke="#444" /></Svg>
      </button>
      <button type="button" aria-label="选择选项" className="flex h-[23px] w-[13px] shrink-0 items-center justify-center border border-l-0 border-[#8e9094] bg-[#e2e5ea]">
        <Caret />
      </button>
      <span className="ml-[3px] flex">
        <Svg>
          <path d="M1 0v10l2-2 2 4 2-1-2-4h3z" fill="#d6d9df" stroke="#96989d" />
          <path d="M7 1v12l3-3 2 5 2-1-2-4.500h4z" fill="#96989d" />
        </Svg>
      </span>
      <div className="mr-[5px] ml-[7px] h-5 w-px shrink-0 bg-[#77797e]" />
      {FILTERS.map((icon, i) => (
        <button key={i} type="button" aria-label={`过滤器 ${i + 1}`} className="flex h-[22px] w-[23px] shrink-0 items-center justify-center">
          <Svg>
            {icon}
            {funnel}
          </Svg>
        </button>
      ))}
      <span className="mr-[10px] ml-auto">
        <DoubleChevron />
      </span>
    </div>
  );
}

function StatusBar() {
  return (
    <footer className="flex h-[25px] shrink-0 items-center justify-end bg-[#d6d9df] pb-1 text-xs">
      <span>零件</span>
      <span className="ml-12">MMGS</span>
      <button type="button" aria-label="单位" className="ml-[15px] rotate-180">
        <Caret />
      </button>
      <button
        type="button"
        aria-label="帮助"
        className="ml-[17px] flex size-[14px] items-center justify-center border border-[#234a78] bg-[#e8f4ec] text-xs font-bold text-[#0a8a28]"
      >
        ?
      </button>
      <button type="button" aria-label="标签" className="ml-12">
        <Svg>
          <path d="M1 9l7-7 5-1 2 6-8 8-5-2z" fill="#f8c828" stroke="#9a6400" />
          <path d="M6 9l4-4M8 11l4-4" stroke="#9a6400" />
          <circle cx="4.500" cy="10.500" r="1.200" fill="#fff" stroke="#9a6400" />
        </Svg>
      </button>
      <svg viewBox="0 0 10 10" width="10" height="10" className="mr-[2px] ml-[13px] self-end" aria-hidden="true">
        <path d="M8 0h2v2H8zM4 4h2v2H4zM8 4h2v2H8zM0 8h2v2H0zM4 8h2v2H4zM8 8h2v2H8z" fill="#b4b7bd" />
      </svg>
    </footer>
  );
}

export default function App() {
  return (
    <div className="relative flex h-screen flex-col overflow-hidden rounded-t-md border-t-2 border-r border-[#3c3f52] bg-linear-to-b from-[#e6e7f4] to-[#d3d6e2] pt-[6px] pr-[7px] pb-[2px] pl-[7px] font-['Noto_Sans','Noto_Sans_CJK_SC',sans-serif] text-[#141416]">
      <TitleBar />
      <Ribbon />
      <div className="flex min-h-0 flex-1">
        <div className="flex min-w-0 flex-1 flex-col">
          <CommandTabs />
          <div className="flex min-h-0 flex-1">
            <FeaturePanel />
            <Viewport />
          </div>
          <DocumentTabs />
        </div>
        <SketchToolbar />
      </div>
      <FilterToolbar />
      <StatusBar />
      <svg
        viewBox="0 0 110 100"
        width="110"
        height="100"
        className="pointer-events-none absolute top-[74px] left-[494px] z-30"
        aria-hidden="true"
      >
        <path d="M109 2L12 90" stroke="#fb0007" strokeWidth="3" />
        <path d="M2 98l9-16 9 10z" fill="#fb0007" />
      </svg>
    </div>
  );
}
